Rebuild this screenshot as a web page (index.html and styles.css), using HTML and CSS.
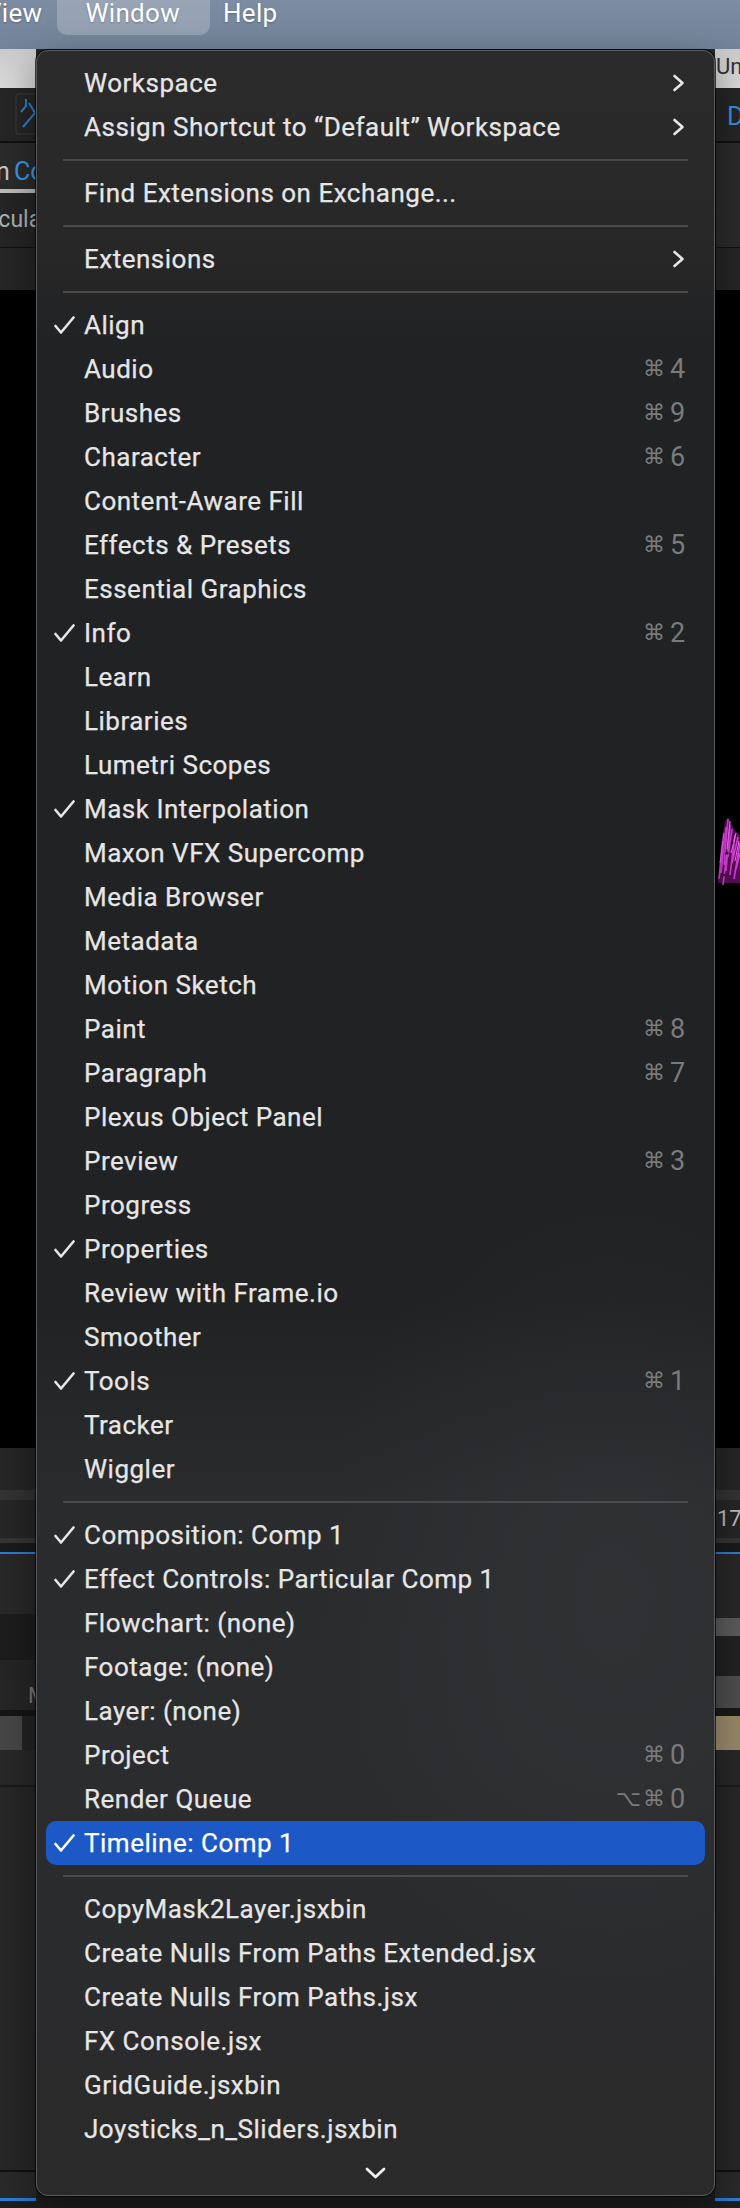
FILE: index.html
```html
<!DOCTYPE html>
<html>
<head>
<meta charset="utf-8">
<title>Window menu</title>
<link rel="stylesheet" href="styles.css">
</head>
<body>
<div class="screen">
  <header class="menubar">
    <span class="mb-item mb-view">View</span>
    <span class="mb-item mb-active">Window</span>
    <span class="mb-item mb-help">Help</span>
  </header>

  <main class="app">
    <div class="col col-left">
      <div class="blk s-title"></div>
      <div class="blk s-tool">
        <svg class="tool-icon" width="22" height="42" viewBox="0 0 22 42">
          <rect x="1" y="1" width="30" height="40" rx="3" fill="none" stroke="#343434" stroke-width="1.5"/>
          <polyline points="11,6 11,13 6,19" fill="none" stroke="#2f7fd0" stroke-width="2"/>
          <polyline points="14,10 20,20 8,34" fill="none" stroke="#2f7fd0" stroke-width="2"/>
        </svg>
      </div>
      <div class="blk s-line2"></div>
      <div class="blk s-tabs"><span class="tab-dim">n </span><span class="tab-blue">Comp 1</span></div>
      <div class="blk s-tabline"></div>
      <div class="blk s-sub"><span class="sub-text">Particular</span></div>
      <div class="blk s-line1"></div>
      <div class="blk s-bar42"></div>
      <div class="blk s-viewer"></div>
      <div class="blk s-bar42"></div>
      <div class="blk s-mid10"></div>
      <div class="blk s-bar38"></div>
      <div class="blk s-mid5"></div>
      <div class="blk s-dark9"></div>
      <div class="blk s-blue"></div>
      <div class="blk s-bar60"></div>
      <div class="blk s-dark46"></div>
      <div class="blk s-bar20"></div>
      <div class="blk s-layerhead"><span class="vline"></span><span class="layer-m">M</span></div>
      <div class="blk s-dark6"></div>
      <div class="blk s-layer"><span class="layer-grey"></span><span class="layer-dark"></span></div>
      <div class="blk s-bar35"></div>
      <div class="blk s-line2b"></div>
      <div class="blk s-fill"></div>
      <div class="blk s-line2"></div>
      <div class="blk s-bar26"></div>
      <div class="blk s-blue3"></div>
      <div class="blk s-rest"></div>
    </div>

    <div class="col col-mid">
      <div class="blk s-midfill"></div>
      <div class="blk s-bar26 mid-knob-row"><span class="knob"></span></div>
      <div class="blk s-blue3"></div>
      <div class="blk s-rest"></div>
    </div>

    <div class="col col-right">
      <div class="blk s-title"><span class="title-text">Untitled Project.aep</span></div>
      <div class="blk s-tool"><span class="tool-d">D</span></div>
      <div class="blk s-line2"></div>
      <div class="blk s-panel104"></div>
      <div class="blk s-line1"></div>
      <div class="blk s-bar42"></div>
      <div class="blk s-viewer">
        <svg class="particles" width="25" height="78" viewBox="0 0 25 78">
          <path d="M3 70 L6 30 L10 8 L13 4 L16 10 L20 18 L25 22 L25 70 Z" fill="#5a0f5a"/>
          <path d="M4 66 L8 28 M6 60 L11 14 M9 52 L13 6 M11 58 L15 12 M13 44 L17 16 M15 62 L20 22 M17 50 L23 24 M19 66 L25 30 M8 72 L12 40 M21 56 L25 40" stroke="#e040e0" stroke-width="1.6" fill="none"/>
          <path d="M5 50 L9 20 M12 36 L15 8 M16 40 L21 20 M20 48 L24 28" stroke="#ff70ff" stroke-width="1" fill="none"/>
          <circle cx="12" cy="40" r="1.6" fill="#200020"/>
          <circle cx="17" cy="30" r="1.4" fill="#200020"/>
          <circle cx="9" cy="62" r="1.2" fill="#200020"/>
        </svg>
      </div>
      <div class="blk s-bar42"></div>
      <div class="blk s-mid10"></div>
      <div class="blk s-bar38"><span class="time-text">17;</span></div>
      <div class="blk s-mid5"></div>
      <div class="blk s-dark9"></div>
      <div class="blk s-blue"></div>
      <div class="blk s-bar64"></div>
      <div class="blk s-grey18"></div>
      <div class="blk s-dark40"></div>
      <div class="blk s-grey32"></div>
      <div class="blk s-dark8"></div>
      <div class="blk s-tan"></div>
      <div class="blk s-bar35"></div>
      <div class="blk s-line2b"></div>
      <div class="blk s-fill"></div>
      <div class="blk s-line2"></div>
      <div class="blk s-bar26"></div>
      <div class="blk s-blue3"></div>
      <div class="blk s-rest"></div>
    </div>
  </main>

  <nav class="menu">
    <div class="mi"><span class="ck"></span><span class="lbl">Workspace</span><svg class="chev" width="13" height="18" viewBox="0 0 13 18"><polyline points="2.5,2 10.5,9 2.5,16"/></svg></div>
    <div class="mi"><span class="ck"></span><span class="lbl">Assign Shortcut to “Default” Workspace</span><svg class="chev" width="13" height="18" viewBox="0 0 13 18"><polyline points="2.5,2 10.5,9 2.5,16"/></svg></div>
    <div class="sep"></div>
    <div class="mi"><span class="ck"></span><span class="lbl">Find Extensions on Exchange...</span></div>
    <div class="sep"></div>
    <div class="mi"><span class="ck"></span><span class="lbl">Extensions</span><svg class="chev" width="13" height="18" viewBox="0 0 13 18"><polyline points="2.5,2 10.5,9 2.5,16"/></svg></div>
    <div class="sep"></div>

    <div class="mi"><span class="ck"><svg width="21" height="18" viewBox="0 0 21 18"><polyline points="1.5,10 7,16.5 19.5,1.5"/></svg></span><span class="lbl">Align</span></div>
    <div class="mi"><span class="ck"></span><span class="lbl">Audio</span><span class="sc"><span class="mod">⌘</span><span class="key">4</span></span></div>
    <div class="mi"><span class="ck"></span><span class="lbl">Brushes</span><span class="sc"><span class="mod">⌘</span><span class="key">9</span></span></div>
    <div class="mi"><span class="ck"></span><span class="lbl">Character</span><span class="sc"><span class="mod">⌘</span><span class="key">6</span></span></div>
    <div class="mi"><span class="ck"></span><span class="lbl">Content-Aware Fill</span></div>
    <div class="mi"><span class="ck"></span><span class="lbl">Effects &amp; Presets</span><span class="sc"><span class="mod">⌘</span><span class="key">5</span></span></div>
    <div class="mi"><span class="ck"></span><span class="lbl">Essential Graphics</span></div>
    <div class="mi"><span class="ck"><svg width="21" height="18" viewBox="0 0 21 18"><polyline points="1.5,10 7,16.5 19.5,1.5"/></svg></span><span class="lbl">Info</span><span class="sc"><span class="mod">⌘</span><span class="key">2</span></span></div>
    <div class="mi"><span class="ck"></span><span class="lbl">Learn</span></div>
    <div class="mi"><span class="ck"></span><span class="lbl">Libraries</span></div>
    <div class="mi"><span class="ck"></span><span class="lbl">Lumetri Scopes</span></div>
    <div class="mi"><span class="ck"><svg width="21" height="18" viewBox="0 0 21 18"><polyline points="1.5,10 7,16.5 19.5,1.5"/></svg></span><span class="lbl">Mask Interpolation</span></div>
    <div class="mi"><span class="ck"></span><span class="lbl">Maxon VFX Supercomp</span></div>
    <div class="mi"><span class="ck"></span><span class="lbl">Media Browser</span></div>
    <div class="mi"><span class="ck"></span><span class="lbl">Metadata</span></div>
    <div class="mi"><span class="ck"></span><span class="lbl">Motion Sketch</span></div>
    <div class="mi"><span class="ck"></span><span class="lbl">Paint</span><span class="sc"><span class="mod">⌘</span><span class="key">8</span></span></div>
    <div class="mi"><span class="ck"></span><span class="lbl">Paragraph</span><span class="sc"><span class="mod">⌘</span><span class="key">7</span></span></div>
    <div class="mi"><span class="ck"></span><span class="lbl">Plexus Object Panel</span></div>
    <div class="mi"><span class="ck"></span><span class="lbl">Preview</span><span class="sc"><span class="mod">⌘</span><span class="key">3</span></span></div>
    <div class="mi"><span class="ck"></span><span class="lbl">Progress</span></div>
    <div class="mi"><span class="ck"><svg width="21" height="18" viewBox="0 0 21 18"><polyline points="1.5,10 7,16.5 19.5,1.5"/></svg></span><span class="lbl">Properties</span></div>
    <div class="mi"><span class="ck"></span><span class="lbl">Review with Frame.io</span></div>
    <div class="mi"><span class="ck"></span><span class="lbl">Smoother</span></div>
    <div class="mi"><span class="ck"><svg width="21" height="18" viewBox="0 0 21 18"><polyline points="1.5,10 7,16.5 19.5,1.5"/></svg></span><span class="lbl">Tools</span><span class="sc"><span class="mod">⌘</span><span class="key">1</span></span></div>
    <div class="mi"><span class="ck"></span><span class="lbl">Tracker</span></div>
    <div class="mi"><span class="ck"></span><span class="lbl">Wiggler</span></div>
    <div class="sep"></div>

    <div class="mi"><span class="ck"><svg width="21" height="18" viewBox="0 0 21 18"><polyline points="1.5,10 7,16.5 19.5,1.5"/></svg></span><span class="lbl">Composition: Comp 1</span></div>
    <div class="mi"><span class="ck"><svg width="21" height="18" viewBox="0 0 21 18"><polyline points="1.5,10 7,16.5 19.5,1.5"/></svg></span><span class="lbl">Effect Controls: Particular Comp 1</span></div>
    <div class="mi"><span class="ck"></span><span class="lbl">Flowchart: (none)</span></div>
    <div class="mi"><span class="ck"></span><span class="lbl">Footage: (none)</span></div>
    <div class="mi"><span class="ck"></span><span class="lbl">Layer: (none)</span></div>
    <div class="mi"><span class="ck"></span><span class="lbl">Project</span><span class="sc"><span class="mod">⌘</span><span class="key">0</span></span></div>
    <div class="mi"><span class="ck"></span><span class="lbl">Render Queue</span><span class="sc"><span class="mod">⌥⌘</span><span class="key">0</span></span></div>
    <div class="mi selected"><span class="ck"><svg width="21" height="18" viewBox="0 0 21 18"><polyline points="1.5,10 7,16.5 19.5,1.5"/></svg></span><span class="lbl">Timeline: Comp 1</span></div>
    <div class="sep"></div>

    <div class="mi"><span class="ck"></span><span class="lbl">CopyMask2Layer.jsxbin</span></div>
    <div class="mi"><span class="ck"></span><span class="lbl">Create Nulls From Paths Extended.jsx</span></div>
    <div class="mi"><span class="ck"></span><span class="lbl">Create Nulls From Paths.jsx</span></div>
    <div class="mi"><span class="ck"></span><span class="lbl">FX Console.jsx</span></div>
    <div class="mi"><span class="ck"></span><span class="lbl">GridGuide.jsxbin</span></div>
    <div class="mi"><span class="ck"></span><span class="lbl">Joysticks_n_Sliders.jsxbin</span></div>
    <div class="scroll-more"><svg width="21" height="12" viewBox="0 0 21 12"><polyline points="2,2 10.5,10 19,2"/></svg></div>
  </nav>
</div>
</body>
</html>
```

FILE: styles.css
```css
* { box-sizing: border-box; margin: 0; padding: 0; }

html, body {
  width: 740px;
  height: 2208px;
  overflow: hidden;
  background: #1e1e1e;
}

body {
  font-family: Roboto, "Liberation Sans", sans-serif;
}

.screen {
  position: relative;
  width: 740px;
  height: 2208px;
  overflow: hidden;
  display: flex;
  flex-direction: column;
}

/* ---------- macOS menubar ---------- */
.menubar {
  flex: none;
  height: 49px;
  display: flex;
  align-items: flex-start;
  background: linear-gradient(#7c8ca2, #73849a);
  color: #ffffff;
  font-size: 26px;
  line-height: 26px;
  white-space: nowrap;
  overflow: hidden;
  letter-spacing: 0.3px;
}

.mb-item {
  display: block;
  text-shadow: 0 1px 2px rgba(0, 0, 0, 0.25);
}

.mb-view { margin-left: -15px; }

.mb-active {
  margin-left: 15px;
  margin-top: -10px;
  height: 45px;
  padding: 10px 30px 0 28px;
  border-radius: 10px;
  background: rgba(255, 255, 255, 0.22);
}

.mb-help { margin-left: 13px; }

/* ---------- application behind the menu ---------- */
.app {
  flex: 1;
  display: flex;
  min-height: 0;
}

.col {
  display: flex;
  flex-direction: column;
  overflow: hidden;
}

.col-left { width: 36px; flex: none; }
.col-mid { flex: 1; }
.col-right { width: 25px; flex: none; }

.blk { flex: none; overflow: hidden; white-space: nowrap; }

.s-title { height: 39px; background: linear-gradient(#cbcbcb, #dcdcdc); }
.s-tool { height: 53px; background: #262626; }
.s-line2 { height: 2px; background: #111111; }
.s-tabs { height: 46px; background: #2b2b2b; }
.s-tabline { height: 4px; background: #bdbdbd; }
.s-sub { height: 54px; background: #252525; }
.s-line1 { height: 1px; background: #111111; }
.s-bar42 { height: 42px; background: #262626; }
.s-viewer { height: 1158px; background: #000000; }
.s-mid10 { height: 10px; background: #333333; }
.s-bar38 { height: 38px; background: #262626; }
.s-mid5 { height: 5px; background: #353535; }
.s-dark9 { height: 9px; background: #1b1b1b; }
.s-blue { height: 2px; background: #2b7ed8; }
.s-bar60 { height: 60px; background: #282828; }
.s-dark46 { height: 46px; background: #1d1d1d; }
.s-bar20 { height: 20px; background: #252525; }
.s-layerhead { height: 30px; background: #262626; display: flex; align-items: center; padding-left: 17px; }
.s-dark6 { height: 6px; background: #151515; }
.s-layer { height: 34px; display: flex; }
.s-bar35 { height: 35px; background: #282828; }
.s-line2b { height: 2px; background: #1a1a1a; }
.s-fill { height: 383px; background: #272727; }
.s-bar26 { height: 26px; background: #2a2a2a; }
.s-blue3 { height: 3px; background: #2b7ed8; }
.s-rest { flex: 1; background: #1e1e1e; }

.s-panel104 { height: 104px; background: #2b2b2b; }
.s-bar64 { height: 64px; background: #282828; }
.s-grey18 { height: 18px; background: #5c5c5c; }
.s-dark40 { height: 40px; background: #222222; }
.s-grey32 { height: 32px; background: #4f4f4f; }
.s-dark8 { height: 8px; background: #1a1a1a; }
.s-tan { height: 34px; background: linear-gradient(90deg, #a39372, #978766); }

.s-midfill { flex: 1; background: #272727; }

.tool-icon { display: block; margin: 5px 0 0 15px; }

.s-tabs {
  font-size: 25px;
  line-height: 46px;
  padding-top: 6px;
}
.tab-dim { color: #c8c8c8; margin-left: -4px; }
.tab-blue { color: #3c9be6; margin-left: -2px; }

.s-sub { font-size: 23px; line-height: 54px; color: #b2b2b2; }
.sub-text { display: block; margin-left: -50px; }

.layer-grey { width: 22px; background: #474747; }
.layer-dark { flex: 1; background: #232323; }
.vline { width: 2px; height: 22px; background: #0c0c0c; }
.layer-m { margin-left: 11px; color: #7a7a7a; font-size: 22px; }

.title-text {
  display: block;
  padding-left: 1px;
  color: #333333;
  font-size: 22px;
  line-height: 36px;
}

.tool-d {
  display: block;
  padding-left: 12px;
  padding-top: 14px;
  color: #3592e0;
  font-size: 26px;
  line-height: 28px;
}

.particles { display: block; margin-top: 523px; }

.time-text {
  display: block;
  padding-left: 2px;
  color: #bdbdbd;
  font-size: 22px;
  line-height: 38px;
}

.mid-knob-row { position: relative; }
.knob {
  position: absolute;
  left: 636px;
  top: 16px;
  width: 13px;
  height: 13px;
  border-radius: 50%;
  background: #707070;
}

/* ---------- the dropdown menu ---------- */
.menu {
  position: absolute;
  left: 36px;
  top: 50px;
  width: 679px;
  padding-top: 10px;
  border: 1px solid #5a5b5c;
  border-radius: 12px;
  box-shadow: 0 0 0 1px rgba(0, 0, 0, 0.7), 0 16px 40px rgba(0, 0, 0, 0.45);
  background:
    radial-gradient(ellipse 420px 600px at 85% 72%, rgba(70, 72, 76, 0.22), rgba(70, 72, 76, 0) 70%),
    linear-gradient(180deg,
      #2b2b2c 0px,
      #272728 200px,
      #212223 300px,
      #212223 1250px,
      #2a2b2d 1450px,
      #2b2c2e 1700px,
      #2a2a2b 2145px);
  color: #e6e6e6;
  font-size: 26px;
  letter-spacing: 0.5px;
  z-index: 10;
}

.mi {
  height: 44px;
  margin: 0 9px;
  padding: 0 18px 0 8px;
  display: flex;
  align-items: center;
  border-radius: 10px;
  white-space: nowrap;
}

.mi.selected {
  background: #1c59c6;
  color: #ffffff;
}

.ck {
  flex: none;
  width: 30px;
  height: 18px;
  display: flex;
  align-items: center;
}

.ck svg { display: block; }
.ck polyline {
  fill: none;
  stroke: #e6e6e6;
  stroke-width: 2.6;
  stroke-linecap: round;
  stroke-linejoin: round;
}
.selected .ck polyline { stroke: #ffffff; }

.lbl {
  flex: 1;
  line-height: 44px;
  -webkit-text-stroke: 0.25px currentColor;
}

.chev {
  flex: none;
  display: block;
  margin-right: 2px;
}
.chev polyline {
  fill: none;
  stroke: #e6e6e6;
  stroke-width: 2.6;
  stroke-linecap: round;
  stroke-linejoin: round;
}

.sc {
  flex: none;
  display: flex;
  align-items: center;
  color: #7b7b7b;
  line-height: 44px;
}

.mod {
  font-family: "DejaVu Sans", sans-serif;
  font-size: 22px;
  letter-spacing: 2px;
  margin-right: 3px;
}

.key {
  width: 17px;
  font-size: 27px;
  letter-spacing: 0;
}

.sep {
  height: 22px;
  margin: 0 26px;
  padding-top: 10px;
}
.sep::before {
  content: "";
  display: block;
  height: 2px;
  background: #4a4a4b;
}

.scroll-more {
  height: 44px;
  display: flex;
  align-items: center;
  justify-content: center;
  padding-bottom: 1px;
}
.scroll-more polyline {
  fill: none;
  stroke: #f0f0f0;
  stroke-width: 2.8;
  stroke-linecap: round;
  stroke-linejoin: round;
}
```
